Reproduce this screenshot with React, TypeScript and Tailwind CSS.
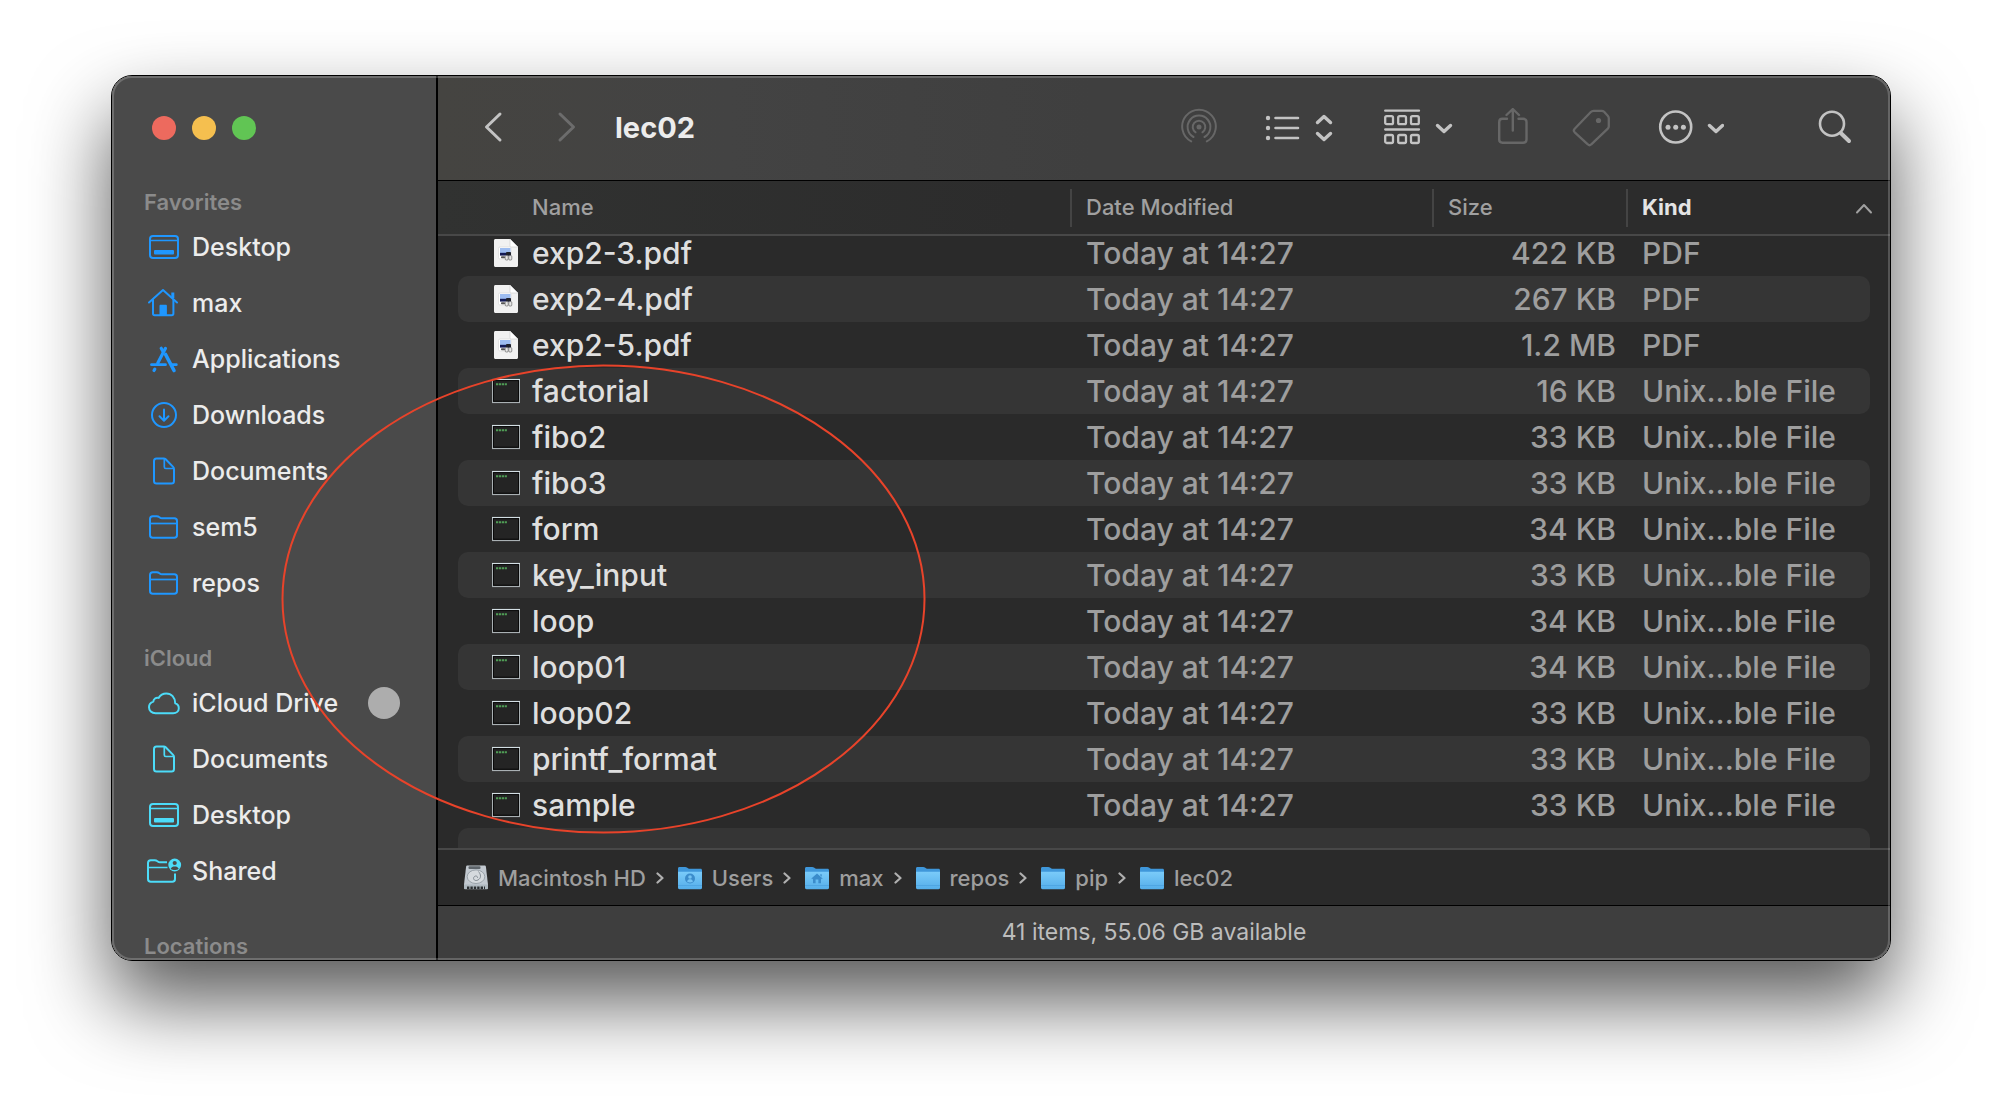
import React from "react";

type IconProps = { className?: string };

const DesktopIcon = ({ className }: IconProps) => (
  <svg className={className} width="36" height="32" viewBox="0 0 36 32" fill="none" stroke="currentColor" strokeWidth="2" aria-hidden="true">
    <rect x="4" y="5" width="28" height="22" rx="3" />
    <path d="M4 9.5h28" strokeWidth="1.6" />
    <rect x="8" y="19" width="20" height="4.4" rx="1" fill="currentColor" stroke="none" />
  </svg>
);

const HomeIcon = ({ className }: IconProps) => (
  <svg className={className} width="36" height="32" viewBox="0 0 36 32" fill="none" stroke="currentColor" strokeWidth="2" strokeLinecap="round" strokeLinejoin="round" aria-hidden="true">
    <path d="M3 15.5 17 3l14 12.500" />
    <path d="M7 13v13.500c0 1 .7 1.700 1.700 1.700h17c1 0 1.700-.7 1.700-1.700V13" />
    <path d="M26.800 11V5.500" strokeWidth="3" strokeLinecap="butt" />
    <path d="M13.500 28V19c0-.8.4-1.200 1.200-1.200h5c.8 0 1.200.4 1.200 1.200v9z" fill="currentColor" stroke="none" />
  </svg>
);

const AppsIcon = ({ className }: IconProps) => (
  <svg className={className} width="36" height="32" viewBox="0 0 36 32" fill="none" stroke="currentColor" strokeWidth="3.200" strokeLinecap="round" aria-hidden="true">
    <path d="M19.500 5.300 11.800 20" />
    <path d="M15.200 5.300 17 8.400" />
    <path d="M19.600 11.500 28 27.500" strokeWidth="3.600" />
    <path d="M5.500 21.700h14" strokeWidth="2.800" />
    <path d="M26 21.700h4.300" strokeWidth="2.800" />
    <path d="M8.800 26.200 8 27.500" />
  </svg>
);

const DownloadIcon = ({ className }: IconProps) => (
  <svg className={className} width="36" height="32" viewBox="0 0 36 32" fill="none" stroke="currentColor" strokeWidth="2" strokeLinecap="round" strokeLinejoin="round" aria-hidden="true">
    <circle cx="18" cy="16" r="12" />
    <path d="M18 10.500v11M13.500 17.300l4.500 4.400 4.500-4.400" />
  </svg>
);

const DocumentIcon = ({ className }: IconProps) => (
  <svg className={className} width="36" height="32" viewBox="0 0 36 32" fill="none" stroke="currentColor" strokeWidth="2" strokeLinejoin="round" aria-hidden="true">
    <path d="M10.500 3.500h7.300c.8 0 1.300.2 1.900.8l7.400 7.600c.6.6.9 1.100.9 2V26c0 1.700-.8 2.500-2.500 2.500h-15C8.800 28.500 8 27.700 8 26V6c0-1.700.8-2.500 2.500-2.500z" />
    <path d="M18.300 4v8c0 1 .5 1.500 1.500 1.500H28" strokeWidth="1.700" />
  </svg>
);

const FolderIcon = ({ className }: IconProps) => (
  <svg className={className} width="36" height="32" viewBox="0 0 36 32" fill="none" stroke="currentColor" strokeWidth="2" strokeLinejoin="round" aria-hidden="true">
    <path d="M4 24V8c0-1.800 1-2.800 2.800-2.800h4c1 0 1.600.2 2.300.8l.7.500c.7.600 1.300.800 2.200.800h12.300C30 7.300 31 8.300 31 10v14c0 1.800-1 2.800-2.700 2.800H6.800C5 26.800 4 25.800 4 24z" />
    <path d="M4 12.500h27" strokeWidth="1.700" />
  </svg>
);

const CloudIcon = ({ className }: IconProps) => (
  <svg className={className} width="36" height="32" viewBox="0 0 36 32" fill="none" stroke="currentColor" strokeWidth="2" strokeLinejoin="round" aria-hidden="true">
    <path d="M9.500 26.300h17.700c3.200 0 5.600-2.200 5.600-5.100 0-2.400-1.400-4.200-3.600-4.900C29.200 10.300 25.300 6.400 20.300 6.400c-3.300 0-6.100 1.700-7.700 4.500-2.700-.7-5.100 1-5.300 3.700C4.700 15.400 3 17.700 3 20.300c0 3.300 2.700 6 6.500 6z" />
  </svg>
);

const SharedIcon = ({ className }: IconProps) => (
  <svg className={className} width="36" height="32" viewBox="0 0 36 32" fill="none" stroke="currentColor" strokeWidth="2" strokeLinejoin="round" aria-hidden="true">
    <path d="M21 7.300h-7c-.900 0-1.500-.2-2.200-.8l-.7-.5c-.700-.6-1.300-.8-2.300-.8h-4C3 5.200 2 6.200 2 8v16c0 1.800 1 2.800 2.800 2.800h21.500c1.700 0 2.700-1 2.700-2.800v-5.500" />
    <path d="M2 12.500h19.500" strokeWidth="1.700" />
    <circle cx="28.700" cy="10" r="6.400" fill="currentColor" stroke="none" />
    <circle cx="28.700" cy="8" r="2.100" fill="#4a4a4a" stroke="none" />
    <path d="M24.700 13.700c.8-1.700 2.200-2.300 4-2.300s3.200.6 4 2.300c-1.200 1-2.500 1.400-4 1.400s-2.800-.4-4-1.400z" fill="#4a4a4a" stroke="none" />
  </svg>
);

const PdfIcon = () => (
  <svg className="h-7 w-7 shrink-0" viewBox="0 0 28 28" aria-hidden="true">
    <path d="M3.500 0H18l8 8v18.500c0 .9-.6 1.500-1.500 1.500h-21C2.600 28 2 27.400 2 26.500v-25C2 .6 2.600 0 3.500 0z" fill="#f1f1f1" />
    <path d="M18 0l8 8h-6.500C18.500 8 18 7.500 18 6.500z" fill="#fff" stroke="#c9c9c9" strokeWidth=".6" />
    <rect x="6.500" y="8" width="12.500" height="12" rx="1.500" fill="#fff" stroke="#d5d5d5" strokeWidth=".6" />
    <rect x="8" y="9" width="10.500" height="5" fill="#9dbcf0" />
    <rect x="8" y="13.800" width="11" height="2.800" fill="#131a55" />
    <rect x="14" y="13" width="5" height="3.500" rx="1" fill="#20222a" />
    <rect x="9" y="17.300" width="4" height="2" rx=".8" fill="#555" />
    <rect x="13.200" y="16.600" width="3" height="4.400" rx="1" fill="#e8e8e8" stroke="#555" strokeWidth=".6" />
    <rect x="16.800" y="16.600" width="3" height="4.400" rx="1" fill="#e8e8e8" stroke="#555" strokeWidth=".6" />
  </svg>
);

const ExecIcon = () => (
  <svg className="h-7 w-7 shrink-0" viewBox="0 0 28 28" aria-hidden="true">
    <rect x="0.500" y="2.500" width="27" height="23" fill="#1c1c1c" stroke="#a9b0b3" strokeWidth="1.200" />
    <path d="M0 2.600h28" stroke="#d3dfe4" strokeWidth="1.200" />
    <rect x="1.500" y="3.600" width="25" height="20.600" fill="#242424" stroke="#090909" />
    <path d="M4 7.300h11" stroke="#4f9d55" strokeWidth="2" strokeDasharray="2.200 .7" />
  </svg>
);

const DriveIcon = () => (
  <svg className="h-7 w-6 shrink-0" viewBox="0 0 24 28" aria-hidden="true">
    <path d="M3.500 1.500h17c.8 0 1.300.4 1.400 1.200L24 20.500v3c0 .8-.5 1.300-1.300 1.300H1.300C.5 24.800 0 24.300 0 23.500v-3L2.100 2.700c.1-.8.600-1.200 1.400-1.200z" fill="#c2c9d0" />
    <path d="M0 20.500h24v3.200c0 1-.5 1.600-1.400 1.600H1.400C.5 25.300 0 24.700 0 23.700z" fill="#aeb8bf" />
    <path d="M3 23.800h18" stroke="#2a2e31" strokeWidth="2.400" strokeDasharray="2.400 1" />
    <rect x="4.500" y="2.300" width="12" height="2.600" rx="1" fill="#5d646a" />
    <ellipse cx="12" cy="12.700" rx="8.800" ry="6.800" fill="#d5dade" stroke="#8d969d" strokeWidth=".8" />
    <path d="M14.500 7.500c2.500 3 3 6.500-.5 8.500-3 1.600-5.500-.8-4-3 1.300-1.800 4-1 3.500 1" fill="none" stroke="#7c858c" strokeWidth=".9" />
  </svg>
);

const BlueFolder = ({ glyph }: { glyph?: "user" | "home" }) => (
  <svg className="h-7 w-6 shrink-0" viewBox="0 0 24 28" aria-hidden="true">
    <defs>
      <linearGradient id="folder-front" x1="0" y1="0" x2="0" y2="1">
        <stop offset="0" stopColor="#7acbf9" />
        <stop offset="1" stopColor="#55aeea" />
      </linearGradient>
    </defs>
    <path d="M0 4.500c0-1 .5-1.600 1.500-1.600h5.700c.8 0 1.200.2 1.800.7l.6.500c.6.500 1 .7 1.900.7h11c1 0 1.500.6 1.500 1.500V14H0z" fill="#3f97da" />
    <path d="M0 7.800h24v15.800c0 1-.5 1.600-1.500 1.600h-21C.5 25.200 0 24.600 0 23.600z" fill="url(#folder-front)" />
    <path d="M0 21.500h24" stroke="#4ba2df" strokeWidth=".8" />
    {glyph === "user" && (
      <g>
        <circle cx="12" cy="14.500" r="5" fill="#3b8ccb" />
        <circle cx="12" cy="13" r="1.800" fill="#74c3f3" />
        <path d="M9 17.500c.6-1.600 1.600-2.200 3-2.200s2.400.6 3 2.200c-1.800 1.300-4.200 1.300-6 0z" fill="#74c3f3" />
      </g>
    )}
    {glyph === "home" && (
      <path d="M12 9.500l5.600 5-.7.800-.9-.7v4.600h-2.600v-3.700h-2.800v3.700H8v-4.600l-.9.700-.7-.8zM15.300 10.300h1.400v2.500l-1.400-1.200z" fill="#3b8ccb" />
    )}
  </svg>
);

type Place = { label: string; Icon: (p: IconProps) => React.JSX.Element; busy?: boolean };

const favorites: Place[] = [
  { label: "Desktop", Icon: DesktopIcon },
  { label: "max", Icon: HomeIcon },
  { label: "Applications", Icon: AppsIcon },
  { label: "Downloads", Icon: DownloadIcon },
  { label: "Documents", Icon: DocumentIcon },
  { label: "sem5", Icon: FolderIcon },
  { label: "repos", Icon: FolderIcon },
];

const icloud: Place[] = [
  { label: "iCloud Drive", Icon: CloudIcon, busy: true },
  { label: "Documents", Icon: DocumentIcon },
  { label: "Desktop", Icon: DesktopIcon },
  { label: "Shared", Icon: SharedIcon },
];

const files = [
  { name: "exp2-3.pdf", size: "422 KB", kind: "PDF" },
  { name: "exp2-4.pdf", size: "267 KB", kind: "PDF" },
  { name: "exp2-5.pdf", size: "1.2 MB", kind: "PDF" },
  { name: "factorial", size: "16 KB", kind: "Unix...ble File" },
  { name: "fibo2", size: "33 KB", kind: "Unix...ble File" },
  { name: "fibo3", size: "33 KB", kind: "Unix...ble File" },
  { name: "form", size: "34 KB", kind: "Unix...ble File" },
  { name: "key_input", size: "33 KB", kind: "Unix...ble File" },
  { name: "loop", size: "34 KB", kind: "Unix...ble File" },
  { name: "loop01", size: "34 KB", kind: "Unix...ble File" },
  { name: "loop02", size: "33 KB", kind: "Unix...ble File" },
  { name: "printf_format", size: "33 KB", kind: "Unix...ble File" },
  { name: "sample", size: "33 KB", kind: "Unix...ble File" },
];

function PlaceGroup({ title, places, tint }: { title: string; places: Place[]; tint: string }) {
  return (
    <section className="mb-[30px]">
      <h2 className="h-[34px] pl-8 text-[22px] leading-[34px] font-semibold text-[#8b8b8b]">{title}</h2>
      <ul>
        {places.map(({ label, Icon, busy }) => (
          <li key={label} className="flex h-14 items-center pr-9 pl-[34px]">
            <a href="#" className="flex items-center gap-2.5 text-[25px] leading-9 font-medium text-[#ececec]">
              <Icon className={tint} />
              {label}
            </a>
            {busy && <span className="ml-auto size-8 rounded-full bg-[#adadad]" />}
          </li>
        ))}
      </ul>
    </section>
  );
}

function Toolbar() {
  return (
    <header className="flex h-[104px] shrink-0 items-center bg-linear-to-r from-[#454441] via-[#434343] via-20% to-[#3f3f3f] to-45% pr-[38px] pl-[45px] text-[#c3c3c3]">
      <button aria-label="Back">
        <svg width="20" height="34" viewBox="0 0 20 34" fill="none" stroke="currentColor" strokeWidth="3" strokeLinecap="round" strokeLinejoin="round">
          <path d="M17 3 3.500 16 17 29" />
        </svg>
      </button>
      <button aria-label="Forward" className="ml-[54px] text-[#6c6c6c]">
        <svg width="20" height="34" viewBox="0 0 20 34" fill="none" stroke="currentColor" strokeWidth="3" strokeLinecap="round" strokeLinejoin="round">
          <path d="M3 3 16.500 16 3 29" />
        </svg>
      </button>
      <h1 className="ml-[38px] text-[29px] leading-9 font-bold text-[#ececec]">lec02</h1>
      <div className="ml-auto flex items-center gap-11">
        <button aria-label="AirDrop" className="text-[#676767]">
          <svg width="40" height="40" viewBox="0 0 40 40" fill="none" stroke="currentColor" strokeWidth="2" strokeLinecap="round">
            <circle cx="19" cy="19" r="2.500" fill="currentColor" stroke="none" />
            <path d="M15.600 24.300a6.300 6.300 0 1 1 6.800 0" />
            <path d="M13.500 29a11.400 11.400 0 1 1 11 0" />
            <path d="M11.200 33.400a16.800 16.800 0 1 1 15.600 0" />
          </svg>
        </button>
        <button aria-label="View as list">
          <svg width="76" height="40" viewBox="0 0 76 40" fill="none" stroke="currentColor" strokeLinecap="round" strokeLinejoin="round">
            <g fill="currentColor" stroke="none">
              <circle cx="4" cy="10" r="2.200" />
              <circle cx="4" cy="20" r="2.200" />
              <circle cx="4" cy="30" r="2.200" />
            </g>
            <path d="M11.500 10h22.500M11.500 20h22.500M11.500 30h22.500" strokeWidth="2.600" />
            <path d="M53.500 14.500 60 8.500l6.500 6M53.500 25.500l6.500 6 6.500-6" strokeWidth="3.400" />
          </svg>
        </button>
        <button aria-label="Group items">
          <svg width="70" height="40" viewBox="0 0 70 40" fill="none" stroke="currentColor" strokeWidth="2.300" strokeLinecap="round" strokeLinejoin="round">
            <path d="M1.200 2.700h33.800M1.200 21.500h33.800" />
            <rect x="1.200" y="8.200" width="7.800" height="8" rx="1.500" />
            <rect x="14.200" y="8.200" width="7.800" height="8" rx="1.500" />
            <rect x="27" y="8.200" width="7.800" height="8" rx="1.500" />
            <rect x="1.200" y="27" width="7.800" height="8" rx="1.500" />
            <rect x="14.200" y="27" width="7.800" height="8" rx="1.500" />
            <rect x="27" y="27" width="7.800" height="8" rx="1.500" />
            <path d="M53.500 17.500l6.500 6 6.500-6" strokeWidth="3.400" />
          </svg>
        </button>
        <button aria-label="Share" className="text-[#676767]">
          <svg width="30" height="40" viewBox="0 0 30 40" fill="none" stroke="currentColor" strokeWidth="2.400" strokeLinecap="round" strokeLinejoin="round">
            <path d="M9 10.800H4.500c-2 0-3.300 1.200-3.300 3.200v17.500c0 2 1.300 3.200 3.300 3.200h20.700c2 0 3.300-1.200 3.300-3.200V14c0-2-1.300-3.200-3.300-3.200H20.500" />
            <path d="M14.800 22.500V1.300M8.500 7 14.800 1 21 7" />
          </svg>
        </button>
        <button aria-label="Edit tags" className="text-[#676767]">
          <svg width="42" height="40" viewBox="0 0 42 40" fill="none" stroke="currentColor" strokeWidth="2.300" strokeLinejoin="round">
            <path d="M21.500 2.800h8.300c1 0 1.600.3 2.300 1l3.800 4.200c.6.700.9 1.300.9 2.300v8c0 1-.3 1.600-1 2.300L19.300 36.300c-1.200 1.200-2.300 1.200-3.500 0L2.700 24.300c-1.200-1.200-1.200-2.300 0-3.500L18.800 4c.8-.8 1.500-1.200 2.700-1.200z" />
            <circle cx="26.500" cy="12.500" r="2.600" fill="currentColor" stroke="none" />
          </svg>
        </button>
        <button aria-label="More actions">
          <svg width="66" height="40" viewBox="0 0 66 40" fill="none" stroke="currentColor" strokeWidth="2.600" strokeLinecap="round" strokeLinejoin="round">
            <circle cx="17.700" cy="19" r="15.500" />
            <g fill="currentColor" stroke="none">
              <circle cx="10" cy="19.200" r="2.500" />
              <circle cx="17.700" cy="19.200" r="2.500" />
              <circle cx="25.400" cy="19.200" r="2.500" />
            </g>
            <path d="M51.500 17.500l6.500 6 6.500-6" strokeWidth="3.400" />
          </svg>
        </button>
        <button aria-label="Search" className="ml-12">
          <svg width="36" height="40" viewBox="0 0 36 40" fill="none" stroke="currentColor" strokeLinecap="round">
            <circle cx="16" cy="15.700" r="12" strokeWidth="2.600" />
            <path d="M25 25.200 33 33" strokeWidth="4" />
          </svg>
        </button>
      </div>
    </header>
  );
}

function FileTable() {
  return (
    <table className="w-full table-fixed border-collapse text-left text-[30px] leading-[34px] font-medium text-[#9e9e9e]">
      <colgroup>
        <col />
        <col className="w-[362px]" />
        <col className="w-[194px]" />
        <col className="w-[262px]" />
      </colgroup>
      <thead className="bg-linear-to-r from-[#313231] to-[#2c2c2c] to-40% text-[22px] text-[#a0a0a0]">
        <tr className="h-[54px] border-b-2 border-[#484848]">
          <th className="p-0 font-medium">
            <div className="h-[38px] border-r-2 border-[#444] pl-[94px] leading-9">Name</div>
          </th>
          <th className="p-0 font-medium">
            <div className="h-[38px] border-r-2 border-[#444] pl-3.5 leading-9">Date Modified</div>
          </th>
          <th className="p-0 font-medium">
            <div className="h-[38px] border-r-2 border-[#444] pl-3.5 leading-9">Size</div>
          </th>
          <th className="p-0 font-bold text-[#e4e4e4]" aria-sort="ascending">
            <div className="flex h-[38px] items-start justify-between pr-[17px] pl-3.5 leading-9">
              Kind
              <svg width="18" height="38" viewBox="0 0 18 38" fill="none" stroke="#a0a0a0" strokeWidth="2" strokeLinecap="round" strokeLinejoin="round" aria-hidden="true">
                <path d="M2 23.500 9 16l7 7.500" />
              </svg>
            </div>
          </th>
        </tr>
      </thead>
      <tbody>
        {files.map((f, i) => {
          const fill = i % 2 === 1 ? "bg-[#353535]" : "";
          const height = i === 0 ? "h-10 pb-1.5" : "h-[46px]";
          return (
            <tr key={f.name}>
              <td className="p-0 pl-5">
                <div className={`flex items-center gap-3 rounded-l-[10px] pl-[34px] text-[#dfdfdf] ${height} ${fill}`}>
                  {f.kind === "PDF" ? <PdfIcon /> : <ExecIcon />}
                  {f.name}
                </div>
              </td>
              <td className="p-0">
                <div className={`flex items-center pl-3.5 ${height} ${fill}`}>Today at 14:27</div>
              </td>
              <td className="p-0">
                <div className={`flex items-center justify-end pr-3 ${height} ${fill}`}>{f.size}</div>
              </td>
              <td className="p-0 pr-5">
                <div className={`flex items-center rounded-r-[10px] pl-3.5 whitespace-nowrap ${height} ${fill}`}>{f.kind}</div>
              </td>
            </tr>
          );
        })}
        <tr aria-hidden="true">
          <td colSpan={4} className="p-0 px-5">
            <div className="h-5 rounded-t-[10px] bg-[#353535]" />
          </td>
        </tr>
      </tbody>
    </table>
  );
}

const crumbs: { label: string; icon: React.JSX.Element }[] = [
  { label: "Macintosh HD", icon: <DriveIcon /> },
  { label: "Users", icon: <BlueFolder glyph="user" /> },
  { label: "max", icon: <BlueFolder glyph="home" /> },
  { label: "repos", icon: <BlueFolder /> },
  { label: "pip", icon: <BlueFolder /> },
  { label: "lec02", icon: <BlueFolder /> },
];

function PathBar() {
  return (
    <nav aria-label="Path" className="h-[58px] border-t-2 border-b border-t-[#484848] border-b-black bg-[#2a2a2a]">
      <ol className="flex h-full items-center pl-[26px] text-[22px] leading-8 font-medium text-[#9e9e9e]">
        {crumbs.map((c, i) => (
          <li key={c.label} className="flex items-center">
            {i > 0 && (
              <svg className="mr-3.5 ml-2.5" width="8" height="12" viewBox="0 0 8 12" fill="none" stroke="#b0b0b0" strokeWidth="2.200" strokeLinecap="round" strokeLinejoin="round" aria-hidden="true">
                <path d="M1.500 1.500 6.500 6l-5 4.500" />
              </svg>
            )}
            <a href="#" className="flex items-center gap-2.5">
              {c.icon}
              {c.label}
            </a>
          </li>
        ))}
      </ol>
    </nav>
  );
}

export default function App() {
  return (
    <div className="min-h-screen overflow-hidden bg-white px-[111px] pt-[75px] pb-[147px] font-[Inter,'Liberation_Sans',sans-serif]">
      <div className="relative rounded-[21px] border border-black shadow-[0_40px_80px_rgba(0,0,0,0.66)]">
        <div className="flex overflow-hidden rounded-[20px] bg-[#2a2a2a]">
          <aside className="w-[326px] shrink-0 overflow-hidden border-r-2 border-black bg-[#4a4a4a] [contain:size]">
            <div className="flex h-[109px] gap-4 pt-10 pl-10">
              <button aria-label="Close" className="size-6 rounded-full bg-[#ed6a5e]" />
              <button aria-label="Minimize" className="size-6 rounded-full bg-[#f5bf4f]" />
              <button aria-label="Zoom" className="size-6 rounded-full bg-[#61c554]" />
            </div>
            <PlaceGroup title="Favorites" places={favorites} tint="text-[#1f97ff]" />
            <PlaceGroup title="iCloud" places={icloud} tint="text-[#4cdcf9]" />
            <PlaceGroup title="Locations" places={[]} tint="text-[#8b8b8b]" />
          </aside>
          <main className="min-w-0 flex-1">
            <Toolbar />
            <div className="border-t border-black">
              <FileTable />
            </div>
            <PathBar />
            <footer className="flex h-[54px] items-center justify-center bg-[#3e3e3e] pr-5 pb-0.5 text-[23px] leading-8 text-[#bdbdbd]">
              41 items, 55.06 GB available
            </footer>
          </main>
        </div>
        <div className="pointer-events-none absolute inset-0 rounded-[20px] border-2 border-white/20" />
        <svg className="pointer-events-none absolute top-[287px] left-[169px]" width="646" height="472" viewBox="0 0 646 472" fill="none" aria-hidden="true">
          <ellipse cx="322.500" cy="236" rx="321" ry="233.500" stroke="#e8432a" strokeWidth="2" />
        </svg>
      </div>
    </div>
  );
}
